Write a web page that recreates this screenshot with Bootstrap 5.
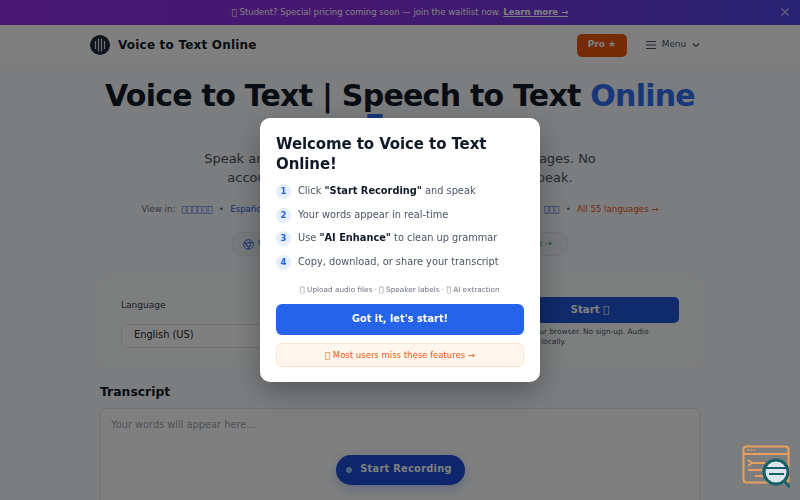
<!DOCTYPE html>
<html lang="en">
<head>
  <meta charset="UTF-8" />
  <meta name="viewport" content="width=device-width, initial-scale=1.0"/>
  <title>Voice to Text Online</title>
  <link href="https://cdn.jsdelivr.net/npm/bootstrap@5.3.3/dist/css/bootstrap.min.css" rel="stylesheet"/>
  <style>
    html, body { height: 100%; overflow: hidden; }
    body {
      font-family: "DejaVu Sans", sans-serif;
      background: #f8fafc;
      color: #111827;
    }

    .promo-bar {
      height: 25px;
      background: linear-gradient(90deg, #9333ea, #8b2fe0 45%, #4f46e5);
      color: #fff;
      font-size: 8.5px;
      padding: 0 10px;
    }
    .promo-bar a { color: #fff; font-weight: 700; }
    .promo-close { right: 10px; top: 5px; opacity: .7; }

    .top-nav {
      height: 41px;
      padding: 0 100px 0 90px;
      background: #fff;
      border-bottom: 1px solid #eef0f3;
    }
    .brand-name { font-size: 12px; font-weight: 700; color: #111827; letter-spacing: .2px; }
    .pro-btn {
      background: #ea580c;
      color: #fff;
      font-size: 9px;
      font-weight: 700;
      padding: 0;
      width: 50px;
      height: 23px;
      border-radius: 5px;
      border: 0;
    }
    .menu-btn { font-size: 8.8px; color: #4b5563; margin-left: 19px; gap: 6px; }

    .hero-wrap { width: 600px; margin: 0 auto; }
    .hero-title {
      font-size: 30px;
      font-weight: 700;
      line-height: 30px;
      letter-spacing: -.75px;
      margin: 15px 0 0;
    }
    .hero-title span { color: #2f6ff0; }
    .hero-sub {
      width: 400px;
      margin: 8px auto 0;
      font-size: 13px;
      line-height: 19px;
      color: #4b5563;
    }
    .lang-links { font-size: 8.6px; height: 12px; color: #6b7280; margin-top: 16px; gap: 6.3px; }
    .lang-links a { color: #2563eb; text-decoration: none; }
    .lang-links .all-link { color: #ea580c; }
    .badge-row { margin-top: 17px; }
    .ext-pill {
      width: 336px;
      height: 24px;
      border: 1px solid #e5e7eb;
      background: #f1f5f9;
      font-size: 8px;
      color: #2563eb;
      padding: 0 15px 0 10px;
    }
    .ext-pill .go { color: #16a34a; }

    .main-wrap { width: 600px; margin: 0 auto; }
    .control-card {
      height: 90px;
      margin-top: 22px;
      background: #fbfcfd;
      border-radius: 12px;
      padding: 19px 21px;
    }
    .field-label { font-size: 9px; color: #374151; margin-bottom: 11px; margin-top: 2px; }
    .lang-select {
      width: 180px;
      height: 24px;
      font-size: 9.8px;
      padding: 0 12px;
      background: #fff;
      border: 1px solid #e5e7eb;
      border-radius: 5px;
      box-shadow: none;
    }
    .start-col { width: 178px; }
    .start-btn {
      height: 26px;
      width: 100%;
      padding: 0;
      background: #1f56d6;
      color: #fff;
      font-size: 10.3px;
      font-weight: 700;
      border: 0;
      border-radius: 5px;
    }
    .start-note { width: 155px; font-size: 7.4px; line-height: 10px; color: #4b5563; margin-top: 4px; }

    .transcript-title { font-size: 12.4px; line-height: 16px; font-weight: 700; margin: 16px 0 8px; }
    .transcript-box {
      height: 92px;
      background: #fff;
      border: 1px solid #e5e7eb;
      border-bottom: 0;
      border-radius: 5px 5px 0 0;
      padding: 9px 10px;
      font-size: 9.8px;
      color: #9ca3af;
    }
    .record-btn {
      margin: 22px auto 0;
      width: 129px;
      height: 30px;
      padding: 0 2px 0 0;
      background: #1d4ed8;
      color: #fff;
      font-size: 9.8px;
      font-weight: 700;
      letter-spacing: .3px;
      border: 0;
      box-shadow: 0 4px 12px rgba(37, 99, 235, .3);
    }
    .rec-dot { width: 6px; height: 6px; background: #93c5fd; }

    .float-widget { right: 10px; bottom: 11px; width: 48px; height: 44px; z-index: 1060; }

    .welcome-backdrop {
      position: fixed;
      inset: 0;
      background: rgba(0, 0, 0, .5);
      z-index: 1050;
    }
    .welcome-box {
      width: 280px;
      background: #fff;
      border-radius: 10px;
      padding: 16px 16px 15px;
      box-shadow: 0 10px 30px rgba(0, 0, 0, .3);
    }
    .welcome-title { font-size: 15px; font-weight: 700; line-height: 20px; letter-spacing: -.1px; margin: 0 0 6px; }
    .welcome-step { height: 23.5px; font-size: 9.8px; color: #4b5563; gap: 7px; }
    .welcome-step b { color: #111827; }
    .step-num {
      width: 15px;
      height: 15px;
      background: #e6eefc;
      color: #2563eb;
      font-size: 8.5px;
      font-weight: 700;
    }
    .welcome-extras { font-size: 7.3px; line-height: 10px; color: #6b7280; margin: 11px 0 9px; }
    .got-btn {
      height: 31px;
      padding: 0;
      background: #2563eb;
      color: #fff;
      font-size: 9.8px;
      font-weight: 700;
      border: 0;
      border-radius: 6px;
    }
    .miss-btn {
      height: 24px;
      padding: 0;
      margin-top: 8px;
      background: #fff7ed;
      border: 1px solid #fde3c8;
      color: #ea580c;
      font-size: 8.5px;
      border-radius: 6px;
    }
  </style>
</head>
<body>

  <div class="promo-bar position-relative d-flex align-items-center justify-content-center">
    <span>&#xE000; Student? Special pricing coming soon — join the waitlist now. <a href="#">Learn more →</a></span>
    <svg class="promo-close position-absolute" width="10" height="14" viewBox="0 0 10 14" fill="none" stroke="#fff" stroke-width="1.1"><path d="M1.5 3.5l7 7M8.5 3.5l-7 7"/></svg>
  </div>

  <nav class="top-nav d-flex align-items-center justify-content-between">
    <div class="d-flex align-items-center gap-2">
      <svg width="20" height="20" viewBox="0 0 20 20">
        <circle cx="10" cy="10" r="10" fill="#1e293b"/>
        <g stroke="#e5e7eb" stroke-width="1.2" stroke-linecap="round">
          <path d="M5.5 6.5v7M8.5 4v12M11.5 4v12M14.5 6.5v7"/>
        </g>
      </svg>
      <span class="brand-name">Voice to Text Online</span>
    </div>
    <div class="d-flex align-items-center">
      <button class="btn pro-btn">Pro ★</button>
      <div class="menu-btn d-flex align-items-center">
        <svg width="10" height="10" viewBox="0 0 10 10" stroke="#4b5563" stroke-width="1.2"><path d="M0 1.5h10M0 5h10M0 8.5h10"/></svg>
        <span>Menu</span>
        <svg width="8" height="8" viewBox="0 0 8 8" fill="none" stroke="#4b5563" stroke-width="1.2"><path d="M1 2.5l3 3 3-3"/></svg>
      </div>
    </div>
  </nav>

  <div class="hero-wrap text-center">
    <h1 class="hero-title">Voice to Text | Speech to Text <span>Online Free</span></h1>
    <p class="hero-sub">Speak and see your words as text, in over 55 languages. No account needed. It appears right away as you speak.</p>
    <div class="lang-links d-flex justify-content-center align-items-center">
      <span>View in:</span><a href="#">&#xE000;&#xE000;&#xE000;&#xE000;&#xE000;&#xE000;</a><span>•</span><a href="#">Español</a><span>•</span><a href="#">Français</a><span>•</span><a href="#">Deutsch</a><span>•</span><a href="#">Italiano</a><span>•</span><a href="#">Português</a><span>•</span><a href="#">Türkçe</a><span>•</span><a href="#">&#xE000;&#xE000;&#xE000;</a><span>•</span><a href="#" class="all-link">All 55 languages →</a>
    </div>
    <div class="badge-row d-flex justify-content-center">
      <div class="ext-pill rounded-pill d-flex align-items-center justify-content-between">
        <span class="d-flex align-items-center gap-1">
          <svg width="11" height="11" viewBox="0 0 12 12" fill="none" stroke="#2563eb" stroke-width="1"><circle cx="6" cy="6" r="5.2"/><circle cx="6" cy="6" r="2.2"/><path d="M6 3.8h5M4.1 7.1L1.6 2.8M7.9 7.1L5.4 11"/></svg>
          Chrome
        </span>
        <span class="go">Free →</span>
      </div>
    </div>
  </div>

  <div class="main-wrap">
    <div class="control-card row g-0 justify-content-between">
      <div class="col-auto">
        <div class="field-label">Language</div>
        <select class="form-select lang-select"><option>English (US)</option></select>
      </div>
      <div class="col-auto start-col">
        <button class="btn start-btn">Start &#xE000;</button>
        <div class="start-note">Runs in your browser. No sign-up. Audio processed locally.</div>
      </div>
    </div>

    <div class="transcript-title">Transcript</div>
    <div class="transcript-box">
      Your words will appear here...
      <button class="btn record-btn rounded-pill d-flex align-items-center justify-content-center gap-2">
        <span class="rec-dot rounded-circle"></span>Start Recording
      </button>
    </div>
  </div>

  <svg class="float-widget position-fixed" viewBox="0 0 48 44" fill="none">
    <rect x="1.5" y="1.5" width="45" height="36" rx="3" stroke="#e8a15c" stroke-width="2"/>
    <path d="M1.5 9h45" stroke="#e8a15c" stroke-width="2"/>
    <path d="M5 5h8" stroke="#e8a15c" stroke-width="1.5" stroke-dasharray="2 1.5"/>
    <path d="M6 15l4 3-4 3M11 18h12M6 25h14M13 31h10" stroke="#e8a15c" stroke-width="2"/>
    <circle cx="34" cy="27" r="12" fill="#d9e6ee" stroke="#17606a" stroke-width="3"/>
    <path d="M23 23h21M27 29h15" stroke="#17606a" stroke-width="2"/>
    <path d="M42 36l6 6" stroke="#17606a" stroke-width="3"/>
  </svg>

  <div class="welcome-backdrop d-flex align-items-center justify-content-center">
    <div class="welcome-box">
      <h2 class="welcome-title">Welcome to Voice to Text Online!</h2>
      <div class="welcome-step d-flex align-items-center"><span class="step-num rounded-circle d-flex align-items-center justify-content-center">1</span><span>Click <b>"Start Recording"</b> and speak</span></div>
      <div class="welcome-step d-flex align-items-center"><span class="step-num rounded-circle d-flex align-items-center justify-content-center">2</span><span>Your words appear in real-time</span></div>
      <div class="welcome-step d-flex align-items-center"><span class="step-num rounded-circle d-flex align-items-center justify-content-center">3</span><span>Use <b>"AI Enhance"</b> to clean up grammar</span></div>
      <div class="welcome-step d-flex align-items-center"><span class="step-num rounded-circle d-flex align-items-center justify-content-center">4</span><span>Copy, download, or share your transcript</span></div>
      <div class="welcome-extras text-center">&#xE000; Upload audio files · &#xE000; Speaker labels · &#xE000; AI extraction</div>
      <button class="btn got-btn w-100 d-block">Got it, let's start!</button>
      <button class="btn miss-btn w-100 d-block">&#xE000; Most users miss these features →</button>
    </div>
  </div>

  <script src="https://cdn.jsdelivr.net/npm/bootstrap@5.3.3/dist/js/bootstrap.bundle.min.js"></script>
</body>
</html>
